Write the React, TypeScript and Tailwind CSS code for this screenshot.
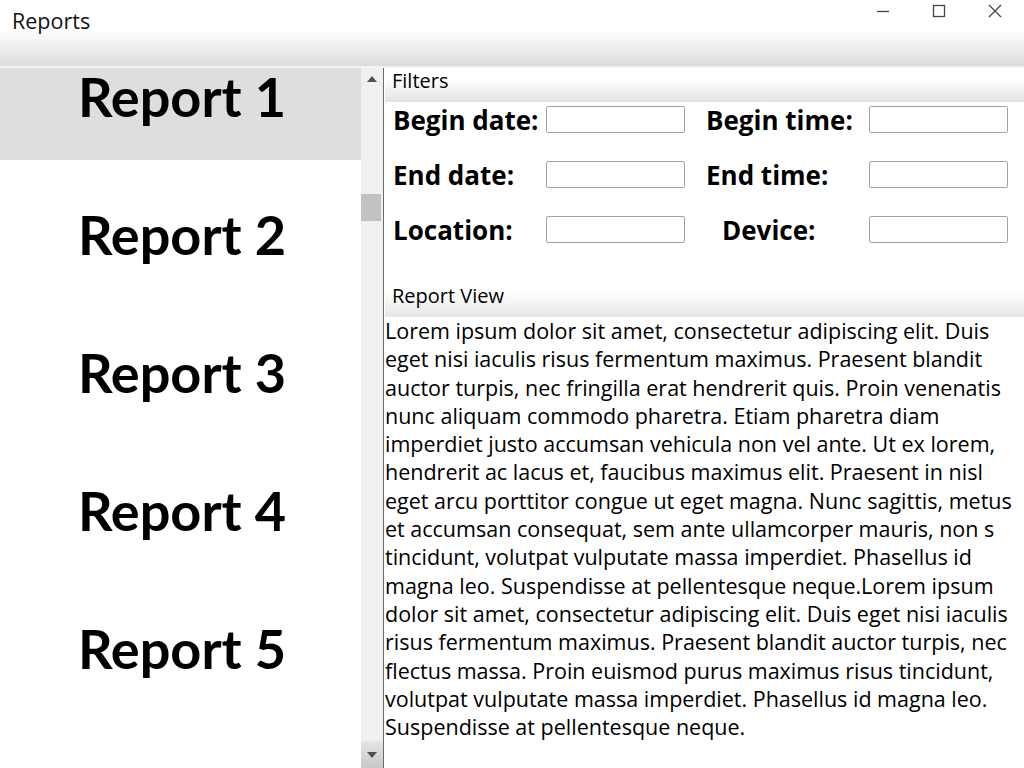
import React from "react";

const reports = ["Report 1", "Report 2", "Report 3", "Report 4", "Report 5"];

const lines = [
  "Lorem ipsum dolor sit amet, consectetur adipiscing elit. Duis",
  "eget nisi iaculis risus fermentum maximus. Praesent blandit",
  "auctor turpis, nec fringilla erat hendrerit quis. Proin venenatis",
  "nunc aliquam commodo pharetra. Etiam pharetra diam",
  "imperdiet justo accumsan vehicula non vel ante. Ut ex lorem,",
  "hendrerit ac lacus et, faucibus maximus elit. Praesent in nisl",
  "eget arcu porttitor congue ut eget magna. Nunc sagittis, metus",
  "et accumsan consequat, sem ante ullamcorper mauris, non s",
  "tincidunt, volutpat vulputate massa imperdiet. Phasellus id",
  "magna leo. Suspendisse at pellentesque neque.Lorem ipsum",
  "dolor sit amet, consectetur adipiscing elit. Duis eget nisi iaculis",
  "risus fermentum maximus. Praesent blandit auctor turpis, nec",
  "flectus massa. Proin euismod purus maximus risus tincidunt,",
  "volutpat vulputate massa imperdiet. Phasellus id magna leo.",
  "Suspendisse at pellentesque neque.",
];

const Field = () => (
  <div className="h-[27px] w-[139px] rounded-[2px] border border-[#a3a3a3] bg-white" />
);

export default function App() {
  return (
    <div
      className="flex h-[768px] w-[1024px] flex-col overflow-hidden bg-white text-black"
      style={{ fontFamily: '"Open Sans", "Noto Sans", sans-serif' }}
    >
      {/* title bar */}
      <div className="flex h-[66px] shrink-0 items-start justify-between bg-gradient-to-b from-white from-45% to-[#dcdcdc]">
        <div className="pl-[12px] pt-[7px] text-[21.5px] leading-[28px] text-[#111]">Reports</div>
        <div className="flex items-center gap-[40px] pr-[21px] pt-[3px] text-[#444]">
          <svg width="16" height="16" viewBox="0 0 16 16">
            <path d="M2 8.5h12" stroke="currentColor" strokeWidth="1.3" />
          </svg>
          <svg width="16" height="16" viewBox="0 0 16 16">
            <rect x="2.5" y="2.5" width="11" height="11" fill="none" stroke="currentColor" strokeWidth="1.3" />
          </svg>
          <svg width="16" height="16" viewBox="0 0 16 16">
            <path d="M2 2l12 12M14 2L2 14" stroke="currentColor" strokeWidth="1.3" />
          </svg>
        </div>
      </div>
      <div className="h-[2px] shrink-0 bg-[#f4f4f4]" />

      <div className="flex min-h-0 flex-1">
        {/* report list */}
        <div className="flex w-[361px] shrink-0 flex-col" style={{ fontFamily: 'Lato, "Open Sans", sans-serif' }}>
          {reports.map((r, i) => (
            <div
              key={r}
              className={`flex h-[92px] shrink-0 justify-center mb-[46px] pl-[3px] text-[54px] font-bold leading-[58px] ${
                i === 0 ? "bg-[#dedede]" : ""
              }`}
            >
              {r}
            </div>
          ))}
        </div>

        {/* scrollbar */}
        <div className="flex w-[22px] shrink-0 flex-col bg-[#f0f0f0]">
          <div className="flex h-[22px] items-center justify-center">
            <svg width="12" height="8" viewBox="0 0 12 8">
              <path d="M1 7L6 1l5 6z" fill="#505050" />
            </svg>
          </div>
          <div className="mt-[104px] h-[27px] w-[20px] bg-[#c2c2c2]" />
          <div className="flex-1" />
          <div className="flex h-[27px] items-center justify-center bg-gradient-to-b from-[#e6e6e6] to-[#c8c8c8]">
            <svg width="12" height="8" viewBox="0 0 12 8">
              <path d="M1 1l5 6 5-6z" fill="#505050" />
            </svg>
          </div>
        </div>
        <div className="w-[1px] shrink-0 bg-[#6a6a6a]" />
        <div className="w-[1px] shrink-0 bg-white" />

        {/* right pane */}
        <div className="flex min-w-0 flex-1 flex-col">
          <div className="h-[34px] shrink-0 bg-gradient-to-b from-white from-30% to-[#e4e4e4] pl-[7px] text-[20px] leading-[26px]">
            Filters
          </div>

          <div className="grid grid-cols-[153px_160px_163px_140px] gap-y-[28px] pl-[8px] pt-[4px] text-[26px] font-bold leading-[28px]">
            <div className="flex h-[27px] items-center">Begin date:</div>
            <Field />
            <div className="flex h-[27px] items-center">Begin time:</div>
            <Field />

            <div className="flex h-[27px] items-center">End date:</div>
            <Field />
            <div className="flex h-[27px] items-center">End time:</div>
            <Field />

            <div className="flex h-[27px] items-center">Location:</div>
            <Field />
            <div className="flex h-[27px] items-center pl-[16px]">Device:</div>
            <Field />
          </div>

          <div className="mt-[38px] h-[36px] shrink-0 bg-gradient-to-b from-white from-30% to-[#e4e4e4] pl-[7px] pt-[1px] text-[20px] leading-[28px]">
            Report View
          </div>

          <div className="overflow-hidden whitespace-nowrap text-[21.5px] leading-[28.3px]">
            {lines.map((l, i) => (
              <div key={i}>{l}</div>
            ))}
          </div>
        </div>
      </div>
    </div>
  );
}
